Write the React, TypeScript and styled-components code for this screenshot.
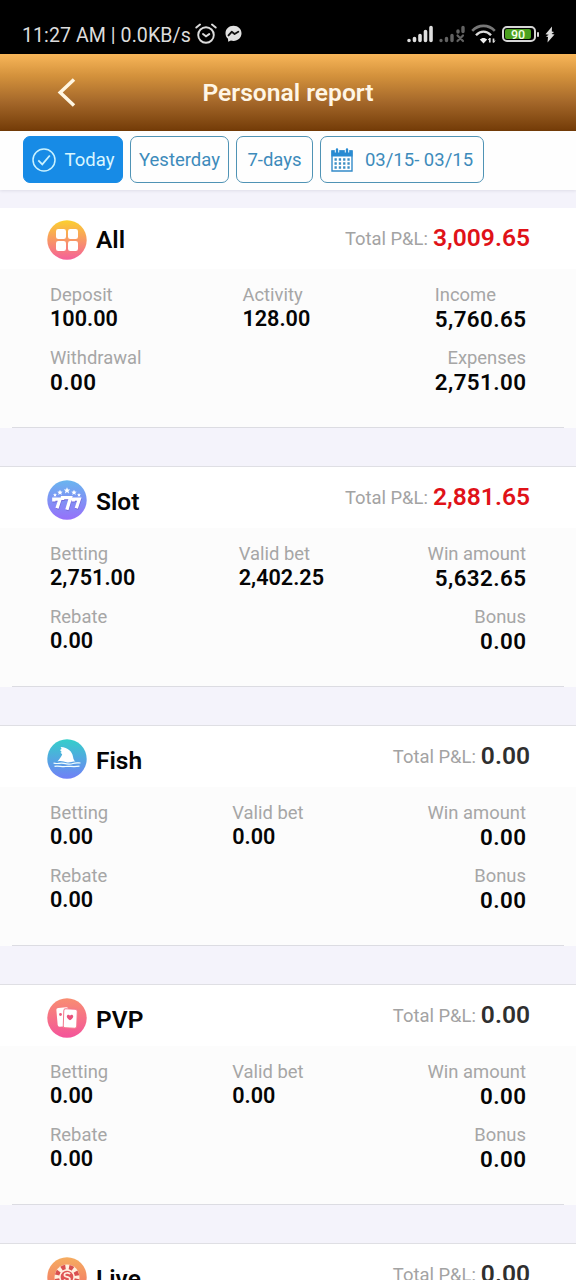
import React from "react";
import styled, { createGlobalStyle } from "styled-components";

const Global = createGlobalStyle`
  * { box-sizing: border-box; }
  html, body { margin: 0; padding: 0; height: 1280px; overflow: hidden; }
  body { background: #f4f3fb; font-family: Roboto, "Liberation Sans", sans-serif; color: #050505; }
  svg { display: block; flex: none; }
`;

const Screen = styled.div`
  width: 576px;
  height: 1280px;
  overflow: hidden;
  display: flex;
  flex-direction: column;
`;

const StatusBar = styled.div`
  flex: none;
  height: 54px;
  background: #000;
  color: #dcdcdc;
  display: flex;
  align-items: flex-start;
  justify-content: space-between;
  padding: 21px 21px 0 22px;
`;

const StatusGroup = styled.div<{ $gap: number }>`
  display: flex;
  align-items: center;
  height: 26px;
  gap: ${(p) => p.$gap}px;
`;

const StatusText = styled.span`
  font-size: 19.6px;
  line-height: 26px;
  padding-top: 3px;
  white-space: nowrap;
  letter-spacing: 0.05px;
  margin-right: -4px;
`;

const TitleBar = styled.header`
  flex: none;
  height: 77px;
  display: grid;
  grid-template-columns: 140px 1fr 140px;
  align-items: center;
  background: linear-gradient(#f8b659 0%, #d4923c 28%, #a5682a 62%, #733b07 100%);
`;

const BackButton = styled.button`
  border: 0;
  padding: 0 0 0 57px;
  background: none;
`;

const PageTitle = styled.h1`
  margin: 0;
  text-align: center;
  font-size: 24.6px;
  line-height: 30px;
  font-weight: 600;
  color: #fff6e6;
  white-space: nowrap;
`;

const Filters = styled.nav`
  flex: none;
  height: 59px;
  display: flex;
  gap: 7px;
  padding: 5px 23px 0;
  background: #fefefe;
  box-shadow: 0 1px 3px rgba(40, 40, 70, 0.1);
`;

const FilterButton = styled.button<{ $width: number; $active?: boolean; $gap?: number }>`
  width: ${(p) => p.$width}px;
  height: 47px;
  padding: 0;
  display: flex;
  align-items: center;
  justify-content: center;
  gap: ${(p) => p.$gap ?? 0}px;
  font-family: inherit;
  font-size: 18.5px;
  line-height: 24px;
  white-space: nowrap;
  border-radius: 7px;
  border: 1px solid ${(p) => (p.$active ? "#178be6" : "#4f93b5")};
  background: ${(p) => (p.$active ? "#178be6" : "#fefefe")};
  color: ${(p) => (p.$active ? "#d9f6ff" : "#3d8bbb")};
`;

const Report = styled.main`
  flex: none;
  padding-top: 18px;
  display: flex;
  flex-direction: column;
  gap: 38px;
`;

const Section = styled.section<{ $first?: boolean }>`
  border-top: ${(p) => (p.$first ? "0" : "1px solid #dfdfe4")};
  background: #fcfcfc;
`;

const SectionHead = styled.div`
  height: 61px;
  display: flex;
  justify-content: space-between;
  padding: 0 46px 0 47px;
  background: #fff;
`;

const Name = styled.div<{ $first?: boolean }>`
  display: flex;
  gap: 9px;
  padding-top: ${(p) => (p.$first ? 12 : 13)}px;
`;

const NameText = styled.h2<{ $first?: boolean }>`
  margin: ${(p) => (p.$first ? 5 : 7)}px 0 0;
  font-size: 24.5px;
  line-height: 30px;
  font-weight: 600;
`;

const Total = styled.div`
  display: flex;
  gap: 5px;
  padding-top: 15px;
  line-height: 30px;
  white-space: nowrap;
`;

const TotalLabel = styled.span`
  font-size: 18.4px;
  line-height: 32px;
  color: #a3a3a3;
`;

const TotalValue = styled.span<{ $win: boolean }>`
  font-size: 24.6px;
  font-weight: 600;
  color: ${(p) => (p.$win ? "#e01218" : "#2f2f2f")};
`;

const Rows = styled.div`
  height: 159px;
  margin: 0 12px;
  padding: 14px 38px 0;
  display: flex;
  flex-direction: column;
  gap: 15px;
  border-bottom: 1px solid #dcdce2;
`;

const Row = styled.div`
  display: flex;
  justify-content: space-between;
`;

const Cell = styled.div<{ $right?: boolean }>`
  text-align: ${(p) => (p.$right ? "right" : "left")};
  white-space: nowrap;
`;

const Label = styled.div`
  font-size: 18.4px;
  line-height: 24px;
  color: #a6a6a6;
`;

const Value = styled.div<{ $large: boolean }>`
  font-size: ${(p) => (p.$large ? 22.4 : 21.6)}px;
  line-height: 24px;
  font-weight: 600;
  letter-spacing: ${(p) => (p.$large ? 0.4 : 0)}px;
  margin-right: ${(p) => (p.$large ? -0.4 : 0)}px;
`;

const AlarmIcon = () => (
  <svg width="22" height="22" viewBox="0 0 22 22" fill="none" stroke="#dcdcdc" strokeWidth="1.9" strokeLinecap="round">
    <circle cx="11" cy="12" r="7.8" />
    <path d="M1.3 4.6 5 1.6M20.7 4.6 17 1.6M8 11l3 2.3 3.2-2.2" />
  </svg>
);

const MessengerIcon = () => (
  <svg width="17" height="18" viewBox="0 0 17 18">
    <path d="M8.5.8C3.900.8.5 4 .5 8.300c0 2.300 1 4.200 2.500 5.500l.2 2.900 2.700-1.200c.8.2 1.700.4 2.600.4 4.600 0 8-3.300 8-7.600S13.100.8 8.500.8z" fill="#e2e2e2" />
    <path d="m3.500 10.400 3.200-3.600 2.900 2.200 3.700-2.200" fill="none" stroke="#111" strokeWidth="1.900" strokeLinejoin="round" strokeLinecap="round" />
  </svg>
);

const SignalIcon = () => (
  <svg width="26" height="18" viewBox="0 0 26 18" stroke="#dedede" strokeWidth="3.600" strokeLinecap="round">
    <path d="M2 15.500v0M7.500 13.500v2M13 10.500v5M18.500 6.500v9M24 2.500v13" />
  </svg>
);

const NoSignalIcon = () => (
  <svg width="26" height="18" viewBox="0 0 26 18" stroke="#626262" strokeWidth="3.400" strokeLinecap="round">
    <path d="M2 15.500v0M7.500 13.500v2M13 10.500v5M19 6v1M24 2.500v4" />
    <path d="m18.500 10.500 5.500 5.500M24 10.500 18.500 16" strokeWidth="2.200" />
  </svg>
);

const WifiIcon = () => (
  <svg width="25" height="20" viewBox="0 0 25 20" fill="none">
    <path d="M1.200 6.800C7.500.2 17.500.2 23.800 6.800" stroke="#777" strokeWidth="2.600" />
    <path d="M5 11.200c4.500-4.800 10.500-4.800 15 0" stroke="#ddd" strokeWidth="2.400" />
    <path d="M8.800 15.600c2.200-2.100 5.200-2.100 7.400 0L12.500 19.500z" fill="#eee" />
    <path d="M18.800 14v4.500M22.500 14.500v4" stroke="#ddd" strokeWidth="1.700" />
    <path d="m17.300 16 1.500-2M24 16.500 22.500 18.500" stroke="#ddd" />
  </svg>
);

const Battery = styled.div`
  width: 34px;
  height: 16px;
  border: 2px solid #d6d6d6;
  border-radius: 5px;
  padding: 1px;
`;

const BatteryLevel = styled.div`
  width: 26px;
  height: 10px;
  border-radius: 2px;
  background: #4ba01f;
  color: #f4ffe8;
  font-size: 12.500px;
  font-weight: 500;
  line-height: 11.500px;
  text-align: center;
`;

const BatteryTip = styled.div`
  width: 2px;
  height: 5px;
  border-radius: 1px;
  background: #d8d8d8;
`;

const BoltIcon = () => (
  <svg width="10" height="17" viewBox="0 0 10 17">
    <path d="M7 .5.500 8.200l3.300.6L1 10.400l2 .5L2.500 16.500l7-8-3-.5 2.600-1.900-2.300-.6z" fill="#dedede" />
  </svg>
);

const BackIcon = () => (
  <svg width="20" height="30" viewBox="0 0 20 30" fill="none" stroke="#fff6e2" strokeWidth="3.500">
    <path d="M17 1.500 3.200 14.500 17 27.500" />
  </svg>
);

const CheckIcon = () => (
  <svg width="24" height="24" viewBox="0 0 24 24" fill="none" stroke="#c9f2ff" strokeWidth="1.500">
    <circle cx="12" cy="12" r="11" />
    <path d="m6.300 12.300 4 4 7.500-8.800" strokeWidth="1.800" />
  </svg>
);

const CalendarIcon = () => (
  <svg width="22" height="24" viewBox="0 0 22 24">
    <path d="M1 3h20v20H1z" fill="#fff" stroke="#338bc9" strokeWidth="1.400" />
    <path d="M.4 2.500h21.200v6H.4z" fill="#298bd2" />
    <path d="M6 .5v4M16 .5v4" stroke="#fefefe" strokeWidth="4.400" />
    <path d="M6 1.500v3M16 1.500v3" stroke="#298bd2" strokeWidth="2.400" strokeLinecap="round" />
    <path d="M3.500 11.500h15.500M3.500 15.500h15.500M3.500 19.500h15.500" stroke="#3e8fc4" strokeWidth="2.300" strokeDasharray="2.300 2" />
  </svg>
);

type Kind = "all" | "slot" | "fish" | "pvp" | "live";

const tints: Record<Kind, [string, string]> = {
  all: ["#fbd02f", "#f5609a"],
  slot: ["#69b5ef", "#9670fa"],
  fish: ["#34cfca", "#7180f7"],
  pvp: ["#f88e72", "#f4549b"],
  live: ["#f5ad60", "#f36b68"],
};

const marks: Record<Kind, React.ReactNode> = {
  all: (
    <g fill="#fff">
      <rect x="9" y="9" width="10" height="10" rx="2.300" />
      <rect x="21" y="9" width="10" height="10" rx="2.300" />
      <rect x="9" y="21" width="10" height="10" rx="2.300" />
      <rect x="21" y="21" width="10" height="10" rx="2.300" />
    </g>
  ),
  slot: (
    <g>
      <g fill="#fff">
        {[[13, 12.5, 2.7], [20, 10.5, 3.2], [27, 12.5, 2.7], [8, 15, 2], [32, 15, 2]].map(([x, y, r]) => (
          <path
            key={x}
            transform={`translate(${x} ${y}) scale(${r})`}
            d="M0-1 .3-.35 1-.3.45.15.65.9 0 .5-.65.9-.45.15-1-.3-.3-.35z"
          />
        ))}
      </g>
      <g fill="none">
        <g stroke="#7468d8" strokeWidth="3.300" transform="translate(.4 1)">
          <path d="M6.800 21.500v-2.300h6.200l-3 9M15.500 20v-2.300h8l-3.600 12M26.300 21.500v-2.300h6l-3 9" />
        </g>
        <g stroke="#fff" strokeWidth="3.300">
          <path d="M6.800 21.500v-2.300h6.200l-3 9M15.500 20v-2.300h8l-3.600 12M26.300 21.500v-2.300h6l-3 9" />
        </g>
      </g>
    </g>
  ),
  fish: (
    <g>
      <path d="M10.500 22.500c2.200-2.500 4.300-5.500 4.700-7.200l-1.700-1.500 1.200-.9-1.700-1.900 1.600-1-1-2c7.700.5 11.600 4.700 12.400 9.700.4 2.300 1.100 4.100 2.600 5.300-2.800-1.200-5 .9-8.200.4-4-.6-5.900-2.200-9.900-.9z" fill="#fff" />
      <path d="M6.500 24c4 1.500 6.500-.7 10.500.4s6 1.200 9 .1 5-.5 7.500-.5M7.500 27.300c4-1 7 .8 11 .2s8 .8 14-.4" fill="none" stroke="#f2ffff" strokeWidth="1.200" />
    </g>
  ),
  pvp: (
    <g>
      <rect x="10" y="9.500" width="12" height="19" rx="2" fill="#fff" transform="rotate(-5 16 19)" />
      <circle cx="13.500" cy="16.500" r="1.400" fill="#ed5d80" />
      <rect x="16.500" y="11" width="13.500" height="19" rx="2" fill="#fff" stroke="#f4778c" strokeWidth="1" transform="rotate(2 23 21)" />
      <path d="M23 22.300c-1.700-1.300-3.200-2.500-3.200-3.900 0-2 2.400-2.300 3.200-.7.900-1.600 3.300-1.200 3.200.7 0 1.400-1.500 2.600-3.200 3.900z" fill="#e9517c" />
    </g>
  ),
  live: (
    <g>
      <circle cx="20" cy="20" r="12.500" fill="#fff0df" />
      <circle cx="20" cy="20" r="10" fill="none" stroke="#d9504f" strokeWidth="4.600" strokeDasharray="4.200 3.654" strokeDashoffset="-1.800" />
      <circle cx="20" cy="20" r="7" fill="#df5654" stroke="#fff0df" strokeWidth="1.300" />
      <path d="M23 17.200c-1-1.800-5.600-1.700-5.600.7 0 2.700 5.500 1.300 5.500 4.100 0 2.400-4.700 2.600-5.900.5" fill="none" stroke="#fff0df" strokeWidth="1.700" />
    </g>
  ),
};

const KindIcon = ({ kind }: { kind: Kind }) => (
  <svg width="40" height="40" viewBox="0 0 40 40">
    <defs>
      <linearGradient id={`tint-${kind}`} x1="0" y1="0" x2="0" y2="1">
        <stop offset="0" stopColor={tints[kind][0]} />
        <stop offset="1" stopColor={tints[kind][1]} />
      </linearGradient>
    </defs>
    <circle cx="20" cy="20" r="19.700" fill={`url(#tint-${kind})`} />
    {marks[kind]}
  </svg>
);

type Entry = { kind: Kind; name: string; total: string; rows: [string, string][][] };

const idle: [string, string][][] = [
  [["Betting", "0.00"], ["Valid bet", "0.00"], ["Win amount", "0.00"]],
  [["Rebate", "0.00"], ["Bonus", "0.00"]],
];

const entries: Entry[] = [
  {
    kind: "all",
    name: "All",
    total: "3,009.65",
    rows: [
      [["Deposit", "100.00"], ["Activity", "128.00"], ["Income", "5,760.65"]],
      [["Withdrawal", "0.00"], ["Expenses", "2,751.00"]],
    ],
  },
  {
    kind: "slot",
    name: "Slot",
    total: "2,881.65",
    rows: [
      [["Betting", "2,751.00"], ["Valid bet", "2,402.25"], ["Win amount", "5,632.65"]],
      [["Rebate", "0.00"], ["Bonus", "0.00"]],
    ],
  },
  { kind: "fish", name: "Fish", total: "0.00", rows: idle },
  { kind: "pvp", name: "PVP", total: "0.00", rows: idle },
  { kind: "live", name: "Live", total: "0.00", rows: idle },
];

export default function App() {
  return (
    <Screen>
      <Global />
      <StatusBar>
        <StatusGroup $gap={8}>
          <StatusText>11:27 AM | 0.0KB/s</StatusText>
          <AlarmIcon />
          <MessengerIcon />
        </StatusGroup>
        <StatusGroup $gap={6}>
          <SignalIcon />
          <NoSignalIcon />
          <WifiIcon />
          <StatusGroup $gap={1}>
            <Battery>
              <BatteryLevel>90</BatteryLevel>
            </Battery>
            <BatteryTip />
          </StatusGroup>
          <BoltIcon />
        </StatusGroup>
      </StatusBar>
      <TitleBar>
        <BackButton aria-label="Back">
          <BackIcon />
        </BackButton>
        <PageTitle>Personal report</PageTitle>
      </TitleBar>
      <Filters>
        <FilterButton $width={100} $gap={9} $active>
          <CheckIcon />
          Today
        </FilterButton>
        <FilterButton $width={99}>Yesterday</FilterButton>
        <FilterButton $width={77}>7-days</FilterButton>
        <FilterButton $width={164} $gap={12}>
          <CalendarIcon />
          03/15- 03/15
        </FilterButton>
      </Filters>
      <Report>
        {entries.map((e, i) => (
          <Section key={e.kind} $first={i === 0}>
            <SectionHead>
              <Name $first={i === 0}>
                <KindIcon kind={e.kind} />
                <NameText $first={i === 0}>{e.name}</NameText>
              </Name>
              <Total>
                <TotalLabel>Total P&amp;L:</TotalLabel>
                <TotalValue $win={e.total !== "0.00"}>{e.total}</TotalValue>
              </Total>
            </SectionHead>
            <Rows>
              {e.rows.map((row, r) => (
                <Row key={r}>
                  {row.map(([label, value], c) => (
                    <Cell key={label} $right={c === row.length - 1 && label !== "Income"}>
                      <Label>{label}</Label>
                      <Value $large={c === row.length - 1 || label === "Withdrawal"}>{value}</Value>
                    </Cell>
                  ))}
                </Row>
              ))}
            </Rows>
          </Section>
        ))}
      </Report>
    </Screen>
  );
}
